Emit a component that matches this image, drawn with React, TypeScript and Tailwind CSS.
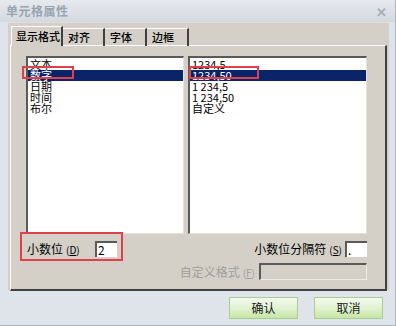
import React from "react"

const formats = ["文本", "数字", "日期", "时间", "布尔"]
const samples = ["1234,5", "1234,50", "1 234,5", "1 234,50", "自定义"]

const font = { fontFamily: '"Noto Sans CJK SC", "Liberation Sans", sans-serif' }

function ListBox({ items, selected, width }: { items: string[]; selected: number; width: string }) {
  return (
    <div
      className={`${width} h-[178px] bg-white border-t-2 border-l-2 border-t-[#5a5a5a] border-l-[#5a5a5a] border-r border-b border-r-[#e4e2dc] border-b-[#e4e2dc] pt-[1px]`}
    >
      {items.map((item, i) => (
        <div
          key={item}
          className={`h-[11px] leading-[11px] text-[11px] pl-[2px] whitespace-nowrap ${
            i === selected ? "bg-[#0a246a] text-white" : "text-black"
          }`}
        >
          {item}
        </div>
      ))}
    </div>
  )
}

function Shortcut({ k }: { k: string }) {
  return (
    <span className="text-[10px] ml-[3px]">
      (<span className="underline">{k}</span>)
    </span>
  )
}

export default function App() {
  return (
    <div className="relative w-[396px] h-[326px] bg-[#dfe3ea] border-r border-b border-[#aeb6c1] select-none" style={font}>
      {/* Title bar */}
      <div className="h-[22px] flex items-center justify-between pl-[6px] pr-[8px] bg-gradient-to-b from-[#e6e9ee] to-[#d4d9e0]">
        <span className="text-[12px] font-semibold text-[#9aa4b0] tracking-[0.5px]">单元格属性</span>
        <span className="text-[13px] font-bold text-[#a6aeb8] leading-none">✕</span>
      </div>

      {/* Body */}
      <div className="ml-[8px] w-[381px] h-[268px] bg-[#d4d0c8] pt-[3px] pl-[2px] pr-[2px] border-t border-t-[#e2dfd8]">
        {/* Tabs */}
        <div className="flex items-end h-[20px] pl-[1px] relative z-10">
          <div className="w-[52px] h-[20px] bg-[#d4d0c8] border-t border-l border-t-white border-l-white border-r-2 border-r-[#404040] text-[11px] font-medium leading-[18px] pl-[4px] whitespace-nowrap">
            显示格式
          </div>
          {["对齐", "字体", "边框"].map((t) => (
            <div
              key={t}
              className="w-[42px] h-[18px] border-t border-t-white border-r-2 border-r-[#404040] text-[11px] font-medium leading-[17px] pl-[5px] whitespace-nowrap"
            >
              {t}
            </div>
          ))}
        </div>

        {/* Tab page */}
        <div className="-mt-[1px] h-[246px] border-t border-l border-t-white border-l-white border-r-2 border-b-2 border-r-[#404040] border-b-[#404040] pt-[10px] pl-[15px]">
          <div className="flex gap-[4px]">
            <ListBox items={formats} selected={1} width="w-[158px]" />
            <ListBox items={samples} selected={1} width="w-[179px]" />
          </div>

          <div className="flex items-center h-[16px] mt-[7px] w-[341px]">
            <span className="text-[12px] leading-none pl-[1px] w-[69px] whitespace-nowrap">
              小数位<Shortcut k="D" />
            </span>
            <div className="w-[22px] h-[16px] bg-white border-t-2 border-l-2 border-t-[#5a5a5a] border-l-[#5a5a5a] text-[12px] leading-[13px] pl-[1px]">
              2
            </div>
            <span className="ml-auto text-[12px] leading-none mr-[3px] whitespace-nowrap">
              小数位分隔符<Shortcut k="S" />
            </span>
            <div className="w-[22px] h-[16px] bg-white border-t-2 border-l-2 border-t-[#5a5a5a] border-l-[#5a5a5a] text-[12px] leading-[13px] pl-[1px]">
              .
            </div>
          </div>

          <div className="flex items-center justify-end h-[17px] mt-[6px] w-[341px]">
            <span className="text-[12px] leading-none text-[#a19e98] mr-[4px] whitespace-nowrap">
              自定义格式<Shortcut k="F" />
            </span>
            <div className="w-[108px] h-[17px] bg-[#d4d0c8] border-t-2 border-l-2 border-t-[#5a5a5a] border-l-[#5a5a5a] border-r border-b border-r-[#eeece6] border-b-[#eeece6]" />
          </div>
        </div>
      </div>

      {/* Buttons */}
      <div className="flex justify-end gap-[16px] pr-[12px] pt-[7px]">
        {["确认", "取消"].map((b) => (
          <button
            key={b}
            className="w-[69px] h-[22px] border border-[#a8cf8c] bg-gradient-to-b from-[#f4faee] via-[#e2f2d2] to-[#c6e6a4] text-[12px] text-[#1a1a1a] leading-none"
          >
            {b}
          </button>
        ))}
      </div>

      {/* Red annotation boxes */}
      <div className="absolute left-[22px] top-[66px] w-[52px] h-[13px] border-2 border-[#e0404c]" />
      <div className="absolute left-[189px] top-[66px] w-[70px] h-[13px] border-2 border-[#e0404c]" />
      <div className="absolute left-[20px] top-[232px] w-[103px] h-[29px] border-2 border-[#e0404c]" />
    </div>
  )
}
